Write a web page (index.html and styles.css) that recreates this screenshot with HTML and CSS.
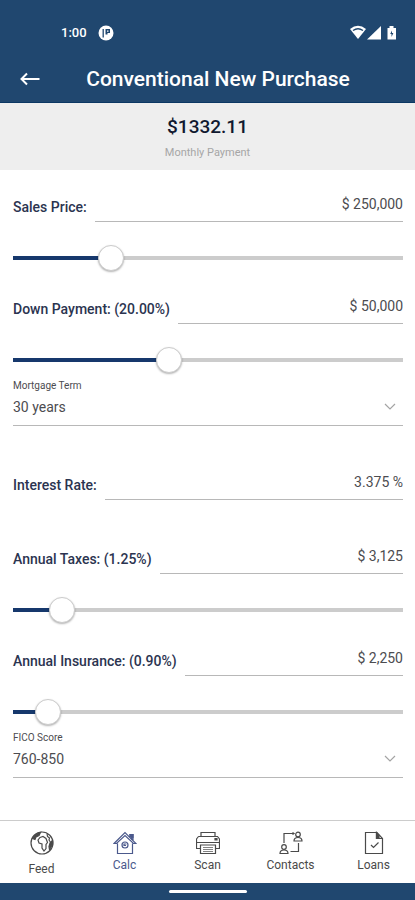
FILE: index.html
```html
<!DOCTYPE html>
<html lang="en">
<head>
<meta charset="utf-8">
<meta name="viewport" content="width=device-width, initial-scale=1">
<title>Conventional New Purchase</title>
<link rel="stylesheet" href="styles.css">
</head>
<body>
<header class="top">
  <div class="status">
    <span class="clock">1:00</span>
    <svg class="badge" viewBox="0 0 16 16" aria-hidden="true"><circle cx="8" cy="8" r="7.500" fill="#fff"/><path d="M5.200 4v8.500" fill="none" stroke="#20476f" stroke-width="1.300"/><path d="M7.500 4h4.500v4h-2.500v1.500h-2z" fill="#20476f"/><path d="M9 5.500h1.500v1.300H9z" fill="#fff"/></svg>
    <svg class="signals" viewBox="0 0 48 16" aria-hidden="true">
      <path d="M0 4Q8-2.500 16 4L8 14z" fill="#fff"/>
      <path d="M3 5.500Q8 2 13 5.500" fill="none" stroke="#20476f" stroke-width="1.300"/>
      <path d="M17 14.500L31 1v13.500z" fill="#fff"/>
      <path d="M37.500 3h2V1h4v2h2.500v11.500h-8.500z" fill="#fff"/>
      <path d="M42 5.500l-1.800 3.500h1.300V12L43.400 8h-1.400z" fill="#20476f"/>
    </svg>
  </div>
  <div class="titlebar">
    <button class="back" type="button" aria-label="Back">
      <svg viewBox="0 0 20 14" aria-hidden="true"><path d="M7 1.500L1.500 7L7 12.500M2 7h17.500" fill="none" stroke="#fff" stroke-width="2"/></svg>
    </button>
    <h1>Conventional New Purchase</h1>
  </div>
</header>

<section class="summary">
  <strong>$1332.11</strong>
  <span>Monthly Payment</span>
</section>

<main class="form">
  <div class="row">
    <label for="price">Sales Price:</label>
    <input id="price" type="text" value="$ 250,000">
  </div>
  <div class="slider" style="--fill: 25%"><input type="range" aria-label="Sales price" min="0" max="1000" value="250"></div>

  <div class="row">
    <label for="down">Down Payment: (20.00%)</label>
    <input id="down" type="text" value="$ 50,000">
  </div>
  <div class="slider" style="--fill: 40%"><input type="range" aria-label="Down payment" min="0" max="1000" value="400"></div>

  <div class="choice">
    <label for="term">Mortgage Term</label>
    <div class="pick">
      <select id="term"><option>30 years</option></select>
      <svg viewBox="0 0 12 8" aria-hidden="true"><path d="M1 1l5 5l5-5" fill="none" stroke="#a4a4a4" stroke-width="1.200"/></svg>
    </div>
  </div>

  <div class="row spaced">
    <label for="rate">Interest Rate:</label>
    <input id="rate" type="text" value="3.375 %">
  </div>

  <div class="row spaced">
    <label for="taxes">Annual Taxes: (1.25%)</label>
    <input id="taxes" type="text" value="$ 3,125">
  </div>
  <div class="slider" style="--fill: 12.5%"><input type="range" aria-label="Annual taxes" min="0" max="1000" value="125"></div>

  <div class="row">
    <label for="insurance">Annual Insurance: (0.90%)</label>
    <input id="insurance" type="text" value="$ 2,250">
  </div>
  <div class="slider" style="--fill: 9%"><input type="range" aria-label="Annual insurance" min="0" max="1000" value="90"></div>

  <div class="choice">
    <label for="fico">FICO Score</label>
    <div class="pick">
      <select id="fico"><option>760-850</option></select>
      <svg viewBox="0 0 12 8" aria-hidden="true"><path d="M1 1l5 5l5-5" fill="none" stroke="#a4a4a4" stroke-width="1.200"/></svg>
    </div>
  </div>
</main>

<nav class="tabs">
  <a class="feed" href="#feed">
    <svg viewBox="0 0 24 24" aria-hidden="true">
      <circle cx="12" cy="12" r="11"/>
      <path d="M10 6.500l3-1l3 2l1.500 4l-1.500 2v4l-2 2.500l-2-3v-4l-3-1l-1-3zM17 2.500l.5 3l2 1.500l-.5 2l2 3"/>
      <path d="M2.500 7.500l3-4l5-2l-1.500 3l-3 1.500l-1 2.500zM20 12l2.500-2.500v4l-3 5l-.5-3z" fill="currentColor"/>
    </svg>
    <span>Feed</span>
  </a>
  <a class="current" href="#calc" aria-current="page">
    <svg viewBox="0 0 24 24" aria-hidden="true">
      <path d="M1 12.500L12 1.500L23 12.500h-2.500L12 4.500L3.500 12.500zM4.500 12.500v10h15v-10M17 6V3.500h3v6"/>
      <path d="M17 3.500h3v3l-1.500 1.500z" fill="currentColor"/>
      <circle cx="12" cy="14" r="3"/>
      <path d="M13.500 13h-2.500v1.500h2"/>
    </svg>
    <span>Calc</span>
  </a>
  <a href="#scan">
    <svg viewBox="0 0 24 24" aria-hidden="true">
      <path d="M5 5.500V1.500h14v4M2.500 5.500h19l2 2.500v9.500H20M4 17.500H.5V8l2-2.500M1 11.500h22M4.500 14v8.500h15V14z"/>
      <path d="M7 16.500h10M7 18.500h10M7 20.500h10" stroke-width="0.700"/>
      <path d="M19 7.500h2v1.500h-2z" fill="currentColor"/>
    </svg>
    <span>Scan</span>
  </a>
  <a href="#contacts">
    <svg viewBox="0 0 24 24" aria-hidden="true">
      <circle cx="19" cy="3.500" r="2.300"/><path d="M15 10q0-3.500 4-3.500t4 3.500z"/>
      <circle cx="5" cy="16" r="2.300"/><path d="M1 22.500q0-3.500 4-3.500t4 3.500z"/>
      <path d="M15 2.500H5V12M11.500 20.500H19.500V12M13.500 1.500l1.500 1l-1.500 1"/>
    </svg>
    <span>Contacts</span>
  </a>
  <a href="#loans">
    <svg viewBox="0 0 24 24" aria-hidden="true">
      <path d="M3.500 1.500h11.500l5.500 6v15H3.500zM14.500 1.500v6H20.500M9 14l2.500 2.500l5-5"/>
      <path d="M14.500 1.500V7.500H17v-3z" fill="currentColor"/>
    </svg>
    <span>Loans</span>
  </a>
</nav>
<footer class="gesture"><span></span></footer>
</body>
</html>
```
FILE: styles.css
```css
* {
  box-sizing: border-box;
}

body {
  margin: 0;
  min-height: 100vh;
  display: flex;
  flex-direction: column;
  background: #fff;
  color: #4c4c50;
  font: 14px/20px Roboto, "Liberation Sans", sans-serif;
}

.top {
  background: #20476f;
  border-bottom: 1px solid #0b3763;
  color: #fff;
}

.status {
  display: flex;
  align-items: center;
  height: 56px;
  padding: 10px 17px 0 61px;
}

.clock {
  font-size: 13px;
  font-weight: 500;
}

.badge {
  width: 16px;
  height: 16px;
  margin-left: 11px;
}

.signals {
  width: 48px;
  height: 16px;
  margin-left: auto;
}

.titlebar {
  display: grid;
  grid-template-columns: 60px 1fr 39px;
  align-items: center;
  height: 46px;
}

.back {
  display: flex;
  justify-content: center;
  padding: 0;
  border: 0;
  background: none;
}

.back svg {
  width: 20px;
  height: 14px;
}

h1 {
  margin: 0;
  font-size: 21px;
  font-weight: 500;
  line-height: 24px;
  text-align: center;
  white-space: nowrap;
}

.summary {
  display: flex;
  flex-direction: column;
  align-items: center;
  gap: 4px;
  padding: 12px 0 7px;
  background: #eee;
}

.summary strong {
  color: #10182f;
  font-size: 19px;
  font-weight: 500;
  line-height: 24px;
}

.summary span {
  color: #a6a6a6;
  font-size: 11px;
}

.form {
  flex: 1;
  padding: 0 12px 0 13px;
}

.row {
  display: flex;
  align-items: flex-end;
  gap: 8px;
  height: 52px;
}

.spaced {
  margin-top: 22px;
}

.row label {
  padding-bottom: 5px;
  color: #2b3450;
  font-weight: 500;
}

.row input {
  flex: 1;
  min-width: 0;
  padding: 0 0 7px;
  border: 0;
  border-bottom: 1px solid #b8b8b8;
  background: none;
  color: inherit;
  font: inherit;
  text-align: right;
}

.slider {
  height: 28px;
  margin-top: 22px;
  background:
    linear-gradient(#16386c, #16386c) left center / var(--fill) 4px no-repeat,
    linear-gradient(#ccc, #ccc) center / 100% 4px no-repeat;
}

/* The thumb's centre travels the whole track, so the input overhangs both ends. */
.slider input {
  display: block;
  width: calc(100% + 26px);
  height: 28px;
  margin: 0 -13px;
  appearance: none;
  background: none;
}

.slider input::-webkit-slider-thumb {
  appearance: none;
  width: 26px;
  height: 26px;
  border: 1px solid #ccc;
  border-radius: 50%;
  background: #fff;
  box-shadow: 0 1px 2px rgb(0 0 0 / 30%);
}

.choice label {
  display: block;
  padding-top: 2px;
  font-size: 10px;
  line-height: 20px;
}

.pick {
  display: flex;
  align-items: center;
  height: 30px;
  padding: 0 7px 7px 0;
  border-bottom: 1px solid #b8b8b8;
}

.pick select {
  flex: 1;
  padding: 0;
  border: 0;
  appearance: none;
  background: none;
  color: inherit;
  font: inherit;
}

.pick svg {
  width: 12px;
  height: 8px;
}

.tabs {
  display: grid;
  grid-template-columns: repeat(5, 1fr);
  height: 63px;
  border-top: 1px solid #ccc;
}

.tabs a {
  display: flex;
  flex-direction: column;
  align-items: center;
  gap: 2px;
  padding-top: 10px;
  color: #4a4a4a;
  font-size: 12px;
  line-height: 16px;
  text-decoration: none;
}

.tabs .feed {
  gap: 6px;
}

.tabs .current {
  color: #4b598c;
}

.tabs svg {
  width: 24px;
  height: 24px;
  fill: none;
  stroke: currentColor;
  stroke-width: 1.2;
}

.gesture {
  display: flex;
  align-items: center;
  justify-content: center;
  height: 17px;
  background: #20476f;
}

.gesture span {
  width: 78px;
  height: 3px;
  border-radius: 2px;
  background: #fff;
}
```
